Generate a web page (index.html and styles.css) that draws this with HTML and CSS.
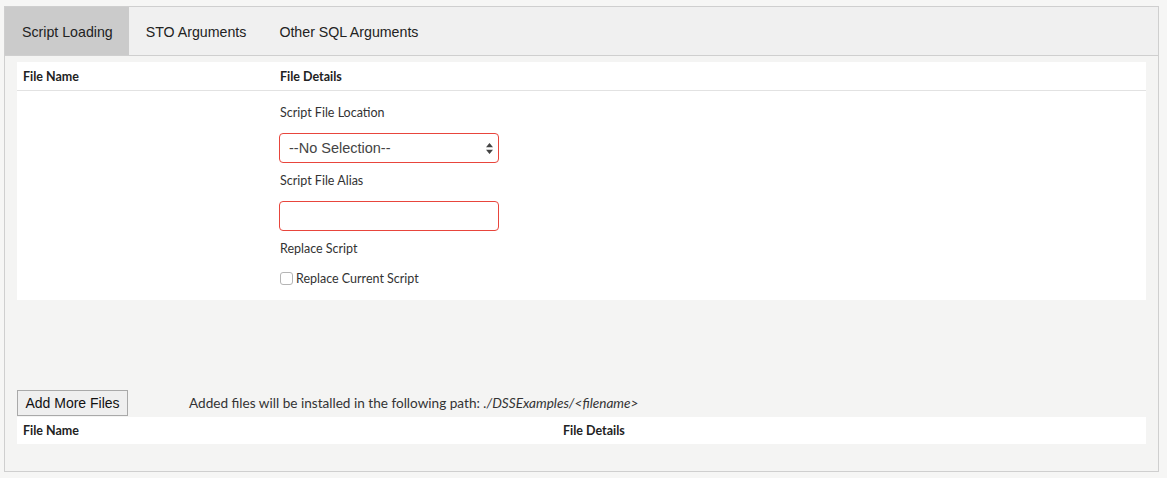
FILE: index.html
```html
<!DOCTYPE html>
<html>
<head>
<meta charset="utf-8">
<link rel="stylesheet" href="styles.css">
</head>
<body>
<div class="box">
  <div class="tabs">
    <div class="tab active">Script Loading</div>
    <div class="tab">STO Arguments</div>
    <div class="tab">Other SQL Arguments</div>
  </div>
  <div class="content">
    <div class="panel">
      <div class="row head">
        <div class="c1">File Name</div>
        <div class="c2">File Details</div>
      </div>
      <div class="row body">
        <div class="c1"></div>
        <div class="c2 form">
          <div class="label">Script File Location</div>
          <div class="select"><span>--No Selection--</span>
            <svg class="arrows" width="7" height="11" viewBox="0 0 7 11"><path d="M3.5 0L7 4.2H0z M3.5 11L0 6.8H7z" fill="#444"/></svg>
          </div>
          <div class="label">Script File Alias</div>
          <div class="input"></div>
          <div class="label">Replace Script</div>
          <label class="check"><span class="box-check"></span>Replace Current Script</label>
        </div>
      </div>
    </div>
    <div class="spacer"></div>
    <div class="actions">
      <button class="btn">Add More Files</button>
      <span class="note">Added files will be installed in the following path: <i>./DSSExamples/&lt;filename&gt;</i></span>
    </div>
    <div class="panel2">
      <div class="p2c1">File Name</div>
      <div class="p2c2">File Details</div>
    </div>
  </div>
</div>
</body>
</html>
```

FILE: styles.css
```css
html, body { margin: 0; padding: 0; }
body {
  background: #f6f6f5;
  width: 1167px;
  height: 478px;
  overflow: hidden;
  font-family: Lato, "Liberation Sans", sans-serif;
  color: #333;
}
.box {
  margin: 6px 0 0 4px;
  width: 1155px;
  height: 466px;
  border: 1px solid #cfcfcf;
  background: #f4f4f3;
  box-sizing: border-box;
  display: flex;
  flex-direction: column;
}
.tabs {
  display: flex;
  height: 49px;
  background: #f0f0f0;
  border-bottom: 1px solid #cfcfcf;
  box-sizing: border-box;
}
.tab {
  font-family: "Liberation Sans", Arial, sans-serif;
  font-size: 14.2px;
  color: #222;
  padding: 0 16px 0 17px;
  display: flex;
  align-items: center;
  padding-top: 1px;
}
.tab.active { background: #cbcbcb; }
.content {
  padding: 6px 12px 0 12px;
  display: flex;
  flex-direction: column;
}
.panel { background: #fff; }
.row { display: flex; }
.c1 { width: 257px; padding-left: 6px; box-sizing: border-box; }
.c2 { padding-left: 6px; }
.head {
  height: 28px;
  align-items: center;
  border-bottom: 1px solid #e2e2e2;
  font-weight: 700;
  font-size: 12.5px;
  color: #222;
}
.body { height: 209px; }
.form { display: flex; flex-direction: column; padding-top: 14px; }
.label { font-size: 12.5px; color: #333; height: 16px; line-height: 16px; }
.select, .input {
  width: 220px;
  height: 30px;
  border: 1px solid #e8453c;
  border-radius: 4px;
  box-sizing: border-box;
  margin: 12px 0 10px -1px;
}
.select {
  display: flex;
  align-items: center;
  justify-content: space-between;
  padding: 0 5px 0 9px;
  font-family: "Liberation Sans", Arial, sans-serif;
  font-size: 14.5px;
  color: #444;
}
.check {
  display: flex;
  align-items: center;
  margin-top: 14px;
  font-size: 12.5px;
  color: #333;
}
.box-check {
  width: 11px;
  height: 11px;
  border: 1px solid #b5b5b5;
  border-radius: 3px;
  background: #fff;
  margin-right: 3px;
}
.spacer { height: 89px; }
.actions { display: flex; align-items: center; height: 27px; }
.btn {
  width: 111px;
  height: 26px;
  border: 1px solid #a9a9a9;
  background: #efefef;
  font-family: "Liberation Sans", Arial, sans-serif;
  font-size: 14px;
  color: #111;
  padding: 0;
  margin: 0;
}
.note { margin-left: 61px; font-size: 13.6px; color: #333; }
.note i { font-style: italic; }
.panel2 {
  margin-top: 1px;
  background: #fff;
  height: 27px;
  display: flex;
  align-items: center;
  font-weight: 700;
  font-size: 12.5px;
  color: #222;
}
.p2c1 { width: 540px; padding-left: 6px; box-sizing: border-box; }
.p2c2 { padding-left: 6px; }
```
